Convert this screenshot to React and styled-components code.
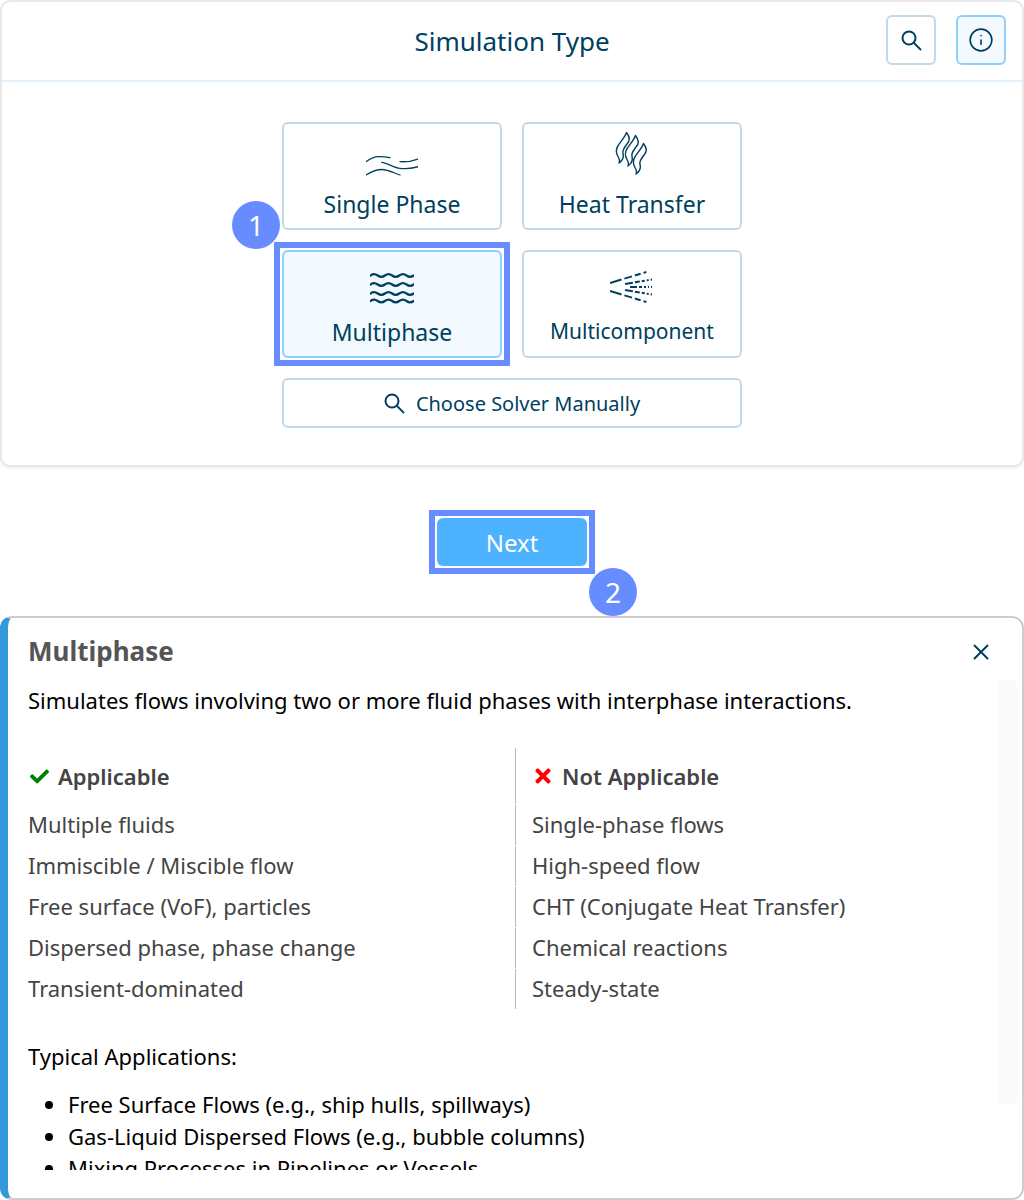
import React from "react";
import styled, { createGlobalStyle } from "styled-components";
import { Info, X } from "lucide-react";
import { FaCheck, FaTimes } from "react-icons/fa";

const navy = "#003f5f";
const marker = "#668cff";

const GlobalStyle = createGlobalStyle`
  * { box-sizing: border-box; }
  body {
    margin: 0;
    background: #fff;
    font-family: "Noto Sans", "Open Sans", sans-serif;
  }
`;

const Page = styled.div`
  width: 1024px;
  height: 1200px;
  overflow: hidden;
`;

// === Simulation type card ===
const TypeCard = styled.section`
  height: 467px;
  border: 2px solid #e8e8e8;
  border-radius: 10px;
  box-shadow: 0 1px 3px rgba(0, 0, 0, 0.08);
  background: #fff;
`;

const CardHeader = styled.header`
  position: relative;
  height: 80px;
  display: flex;
  justify-content: center;
  align-items: center;
  border-bottom: 2px solid #e2f1fb;
`;

const CardTitle = styled.h1`
  margin: 0;
  font-size: 26px;
  font-weight: 400;
  color: ${navy};
`;

const HeaderActions = styled.div`
  position: absolute;
  top: 13px;
  right: 16px;
  display: flex;
  gap: 20px;
`;

const IconButton = styled.button`
  width: 50px;
  height: 50px;
  padding: 0;
  display: flex;
  justify-content: center;
  align-items: center;
  color: ${navy};
  background: ${({ $active }) => ($active ? "#f2f9ff" : "#fff")};
  border: 2px solid ${({ $active }) => ($active ? "#8dcfff" : "#c2d9e8")};
  border-radius: 6px;
`;

const CardBody = styled.div`
  position: relative;
  width: 460px;
  margin: 40px auto 0;
  display: flex;
  flex-direction: column;
  gap: 20px;
`;

const TypeGrid = styled.div`
  display: grid;
  grid-template-columns: 220px 220px;
  grid-auto-rows: 108px;
  gap: 20px;
`;

// square marker drawn round a highlighted control, it does not take up room
const MarkFrame = styled.div`
  display: flex;
  margin: -8px;
  padding: 2px;
  border: 6px solid ${marker};
  background: #fff;
`;

const TypeButton = styled.button`
  width: 100%;
  height: 100%;
  display: flex;
  flex-direction: column;
  align-items: center;
  justify-content: flex-end;
  gap: ${({ $gap }) => $gap}px;
  padding: 0 0 ${({ $small }) => ($small ? 10 : 9)}px;
  font-family: inherit;
  font-size: ${({ $small }) => ($small ? 21 : 23)}px;
  line-height: 30px;
  color: ${navy};
  background: ${({ $active }) => ($active ? "#f2f9ff" : "#fff")};
  border: 2px solid ${({ $active }) => ($active ? "#8dcfff" : "#c2d9e8")};
  border-radius: 6px;
`;

const ManualButton = styled.button`
  height: 50px;
  display: flex;
  justify-content: center;
  align-items: center;
  gap: 11px;
  padding: 0;
  font-family: inherit;
  font-size: 20px;
  color: ${navy};
  background: #fff;
  border: 2px solid #c2d9e8;
  border-radius: 6px;
`;

const StepBadge = styled.span`
  position: absolute;
  top: ${({ $top }) => $top}px;
  left: ${({ $left }) => $left}px;
  width: 48px;
  height: 48px;
  display: flex;
  justify-content: center;
  align-items: center;
  font-size: 28px;
  color: #fff;
  background: ${marker};
  border-radius: 50%;
`;

// === Next ===
const NextRow = styled.div`
  position: relative;
  height: 48px;
  margin: 51px 0 50px;
  display: flex;
  justify-content: center;
`;

const NextButton = styled.button`
  width: 150px;
  height: 48px;
  padding: 0;
  font-family: inherit;
  font-size: 24px;
  color: #fff;
  background: #4db2ff;
  border: none;
  border-radius: 6px;
`;

// === Info panel ===
const InfoPanel = styled.section`
  position: relative;
  height: 584px;
  display: flex;
  flex-direction: column;
  padding: 0 20px 28px;
  border: 2px solid #ccc;
  border-left: 8px solid #3498db;
  border-radius: 12px;
`;

const PanelHeader = styled.header`
  height: 67px;
  flex-shrink: 0;
  display: flex;
  justify-content: space-between;
  align-items: center;
  padding-right: 8px;
`;

const PanelTitle = styled.h2`
  margin: -1px 0 0;
  font-size: 26px;
  font-weight: 700;
  color: #555;
`;

const CloseButton = styled.button`
  display: flex;
  padding: 0;
  color: ${navy};
  background: none;
  border: none;
`;

const PanelScroll = styled.div`
  flex: 1;
  overflow: hidden;
`;

const ScrollTrack = styled.div`
  position: absolute;
  top: 62px;
  right: 4px;
  width: 20px;
  height: 425px;
  background: #fafafa;
  border-radius: 8px;
`;

const Description = styled.p`
  margin: 0 0 33px;
  font-size: 22px;
  line-height: 30px;
  color: #000;
`;

const CompareTable = styled.div`
  display: grid;
  grid-template-columns: 1fr 1fr;
  row-gap: 1px;
`;

const CompareCell = styled.div`
  height: ${({ $head }) => ($head ? 56 : 40)}px;
  display: flex;
  align-items: center;
  gap: 8px;
  padding-left: ${({ $right }) => ($right ? 16 : 0)}px;
  padding-bottom: ${({ $head }) => ($head ? 0 : 2)}px;
  border-left: ${({ $right }) => ($right ? "1px solid #bbb" : "none")};
  font-size: 22px;
  font-weight: ${({ $head }) => ($head ? 600 : 400)};
  color: #444;
`;

const MarkSlot = styled.span`
  width: 22px;
  display: flex;
  justify-content: center;
  color: ${({ $color }) => $color};
`;

const Typical = styled.p`
  margin: 32px 0 17px;
  font-size: 22px;
  line-height: 30px;
  color: #000;
`;

const AppList = styled.ul`
  margin: 0;
  padding-left: 40px;
  font-size: 22px;
  line-height: 32px;
  color: #000;
`;

// === Drawn icons ===
const SearchIcon = () => (
  <svg width="21" height="21" viewBox="0 0 21 21" fill="none" stroke={navy} strokeLinecap="round">
    <circle cx="8" cy="8" r="6.500" strokeWidth="2" />
    <path d="M13 13 19.500 19.500" strokeWidth="1.800" />
  </svg>
);

const SinglePhaseIcon = () => (
  <svg width="52" height="20" viewBox="0 0 52 20" fill="none" stroke={navy} strokeWidth="1.300" strokeLinecap="round">
    <path d="M0 5.700C4 3 8 .8 12 .7 16 .6 20 1 24 1.700" />
    <path d="M34 5.700C40 6 47 5 52 3" />
    <path d="M15.700 6.300C22 7 28 12 34 12.300 40 12.800 47 12.500 52 10.700" />
    <path d="M0 19C5 16 10 13.500 15.700 13.500 22 13.500 28 17 34 19" />
  </svg>
);

const FLAME = "M11.500.5C10 5 6 9 3.500 13 .5 17 1 21 3 24.500 4.500 27 5 29 4 31 7.500 28.500 9 25 8 21.500 7 18 9.500 15.500 12 12 15 9 15 5 11.500.5Z";

const HeatIcon = () => (
  <svg width="34" height="43" viewBox="0 0 34 43" fill="none" stroke={navy} strokeWidth="1.400" strokeLinejoin="round">
    <path d={FLAME} />
    <path d={FLAME} transform="translate(9 3)" />
    <path d={FLAME} transform="translate(17 11)" />
  </svg>
);

const MultiphaseIcon = () => (
  <svg width="44" height="32" viewBox="0 0 44 32" fill="none" stroke={navy} strokeWidth="2.200" strokeLinecap="round">
    {[3.500, 12.500, 21.500, 29].map((y) => (
      <path key={y} d={`M.5 ${y}q3.600-2.600 7.200 0t7.200 0 7.200 0 7.200 0 7.200 0 7.200 0`} />
    ))}
  </svg>
);

const SprayIcon = () => (
  <svg width="44" height="34" viewBox="0 0 44 34" fill="none" stroke={navy} strokeWidth="2">
    <path d="M0 13 38 1.500" strokeDasharray="12 3 8 3 6 3 3 2" />
    <path d="M15 14 42 9.500" strokeDasharray="8 2 5 2 3 2 2 2" />
    <path d="M20 17H44" strokeDasharray="7 2 3 2 2 2 1 2 1 2" />
    <path d="M15 20 42 24.500" strokeDasharray="8 2 5 2 3 2 2 2" />
    <path d="M0 21 38 32.500" strokeDasharray="12 3 8 3 6 3 3 2" />
  </svg>
);

const rows = [
  ["Multiple fluids", "Single-phase flows"],
  ["Immiscible / Miscible flow", "High-speed flow"],
  ["Free surface (VoF), particles", "CHT (Conjugate Heat Transfer)"],
  ["Dispersed phase, phase change", "Chemical reactions"],
  ["Transient-dominated", "Steady-state"],
];

const applications = [
  "Free Surface Flows (e.g., ship hulls, spillways)",
  "Gas-Liquid Dispersed Flows (e.g., bubble columns)",
  "Mixing Processes in Pipelines or Vessels",
];

export default function App() {
  return (
    <Page>
      <GlobalStyle />
      <TypeCard>
        <CardHeader>
          <CardTitle>Simulation Type</CardTitle>
          <HeaderActions>
            <IconButton aria-label="Search">
              <SearchIcon />
            </IconButton>
            <IconButton $active aria-label="Info">
              <Info size={26} strokeWidth={1.5} />
            </IconButton>
          </HeaderActions>
        </CardHeader>
        <CardBody>
          <TypeGrid>
            <TypeButton $gap={13}>
              <SinglePhaseIcon />
              Single Phase
            </TypeButton>
            <TypeButton $gap={14}>
              <HeatIcon />
              Heat Transfer
            </TypeButton>
            <MarkFrame>
              <TypeButton $gap={13} $active>
                <MultiphaseIcon />
                Multiphase
              </TypeButton>
            </MarkFrame>
            <TypeButton $gap={12} $small>
              <SprayIcon />
              Multicomponent
            </TypeButton>
          </TypeGrid>
          <ManualButton>
            <SearchIcon />
            Choose Solver Manually
          </ManualButton>
          <StepBadge $top={79} $left={-50}>1</StepBadge>
        </CardBody>
      </TypeCard>

      <NextRow>
        <MarkFrame>
          <NextButton>Next</NextButton>
        </MarkFrame>
        <StepBadge $top={50} $left={589}>2</StepBadge>
      </NextRow>

      <InfoPanel>
        <PanelHeader>
          <PanelTitle>Multiphase</PanelTitle>
          <CloseButton aria-label="Close">
            <X size={26} strokeWidth={1.8} />
          </CloseButton>
        </PanelHeader>
        <PanelScroll>
          <Description>
            Simulates flows involving two or more fluid phases with interphase interactions.
          </Description>
          <CompareTable>
            <CompareCell $head>
              <MarkSlot $color="#008000"><FaCheck size={19} /></MarkSlot>
              Applicable
            </CompareCell>
            <CompareCell $head $right>
              <MarkSlot $color="#ff0000"><FaTimes size={22} /></MarkSlot>
              Not Applicable
            </CompareCell>
            {rows.map(([yes, no]) => (
              <React.Fragment key={yes}>
                <CompareCell>{yes}</CompareCell>
                <CompareCell $right>{no}</CompareCell>
              </React.Fragment>
            ))}
          </CompareTable>
          <Typical>Typical Applications:</Typical>
          <AppList>
            {applications.map((item) => (
              <li key={item}>{item}</li>
            ))}
          </AppList>
        </PanelScroll>
        <ScrollTrack />
      </InfoPanel>
    </Page>
  );
}
